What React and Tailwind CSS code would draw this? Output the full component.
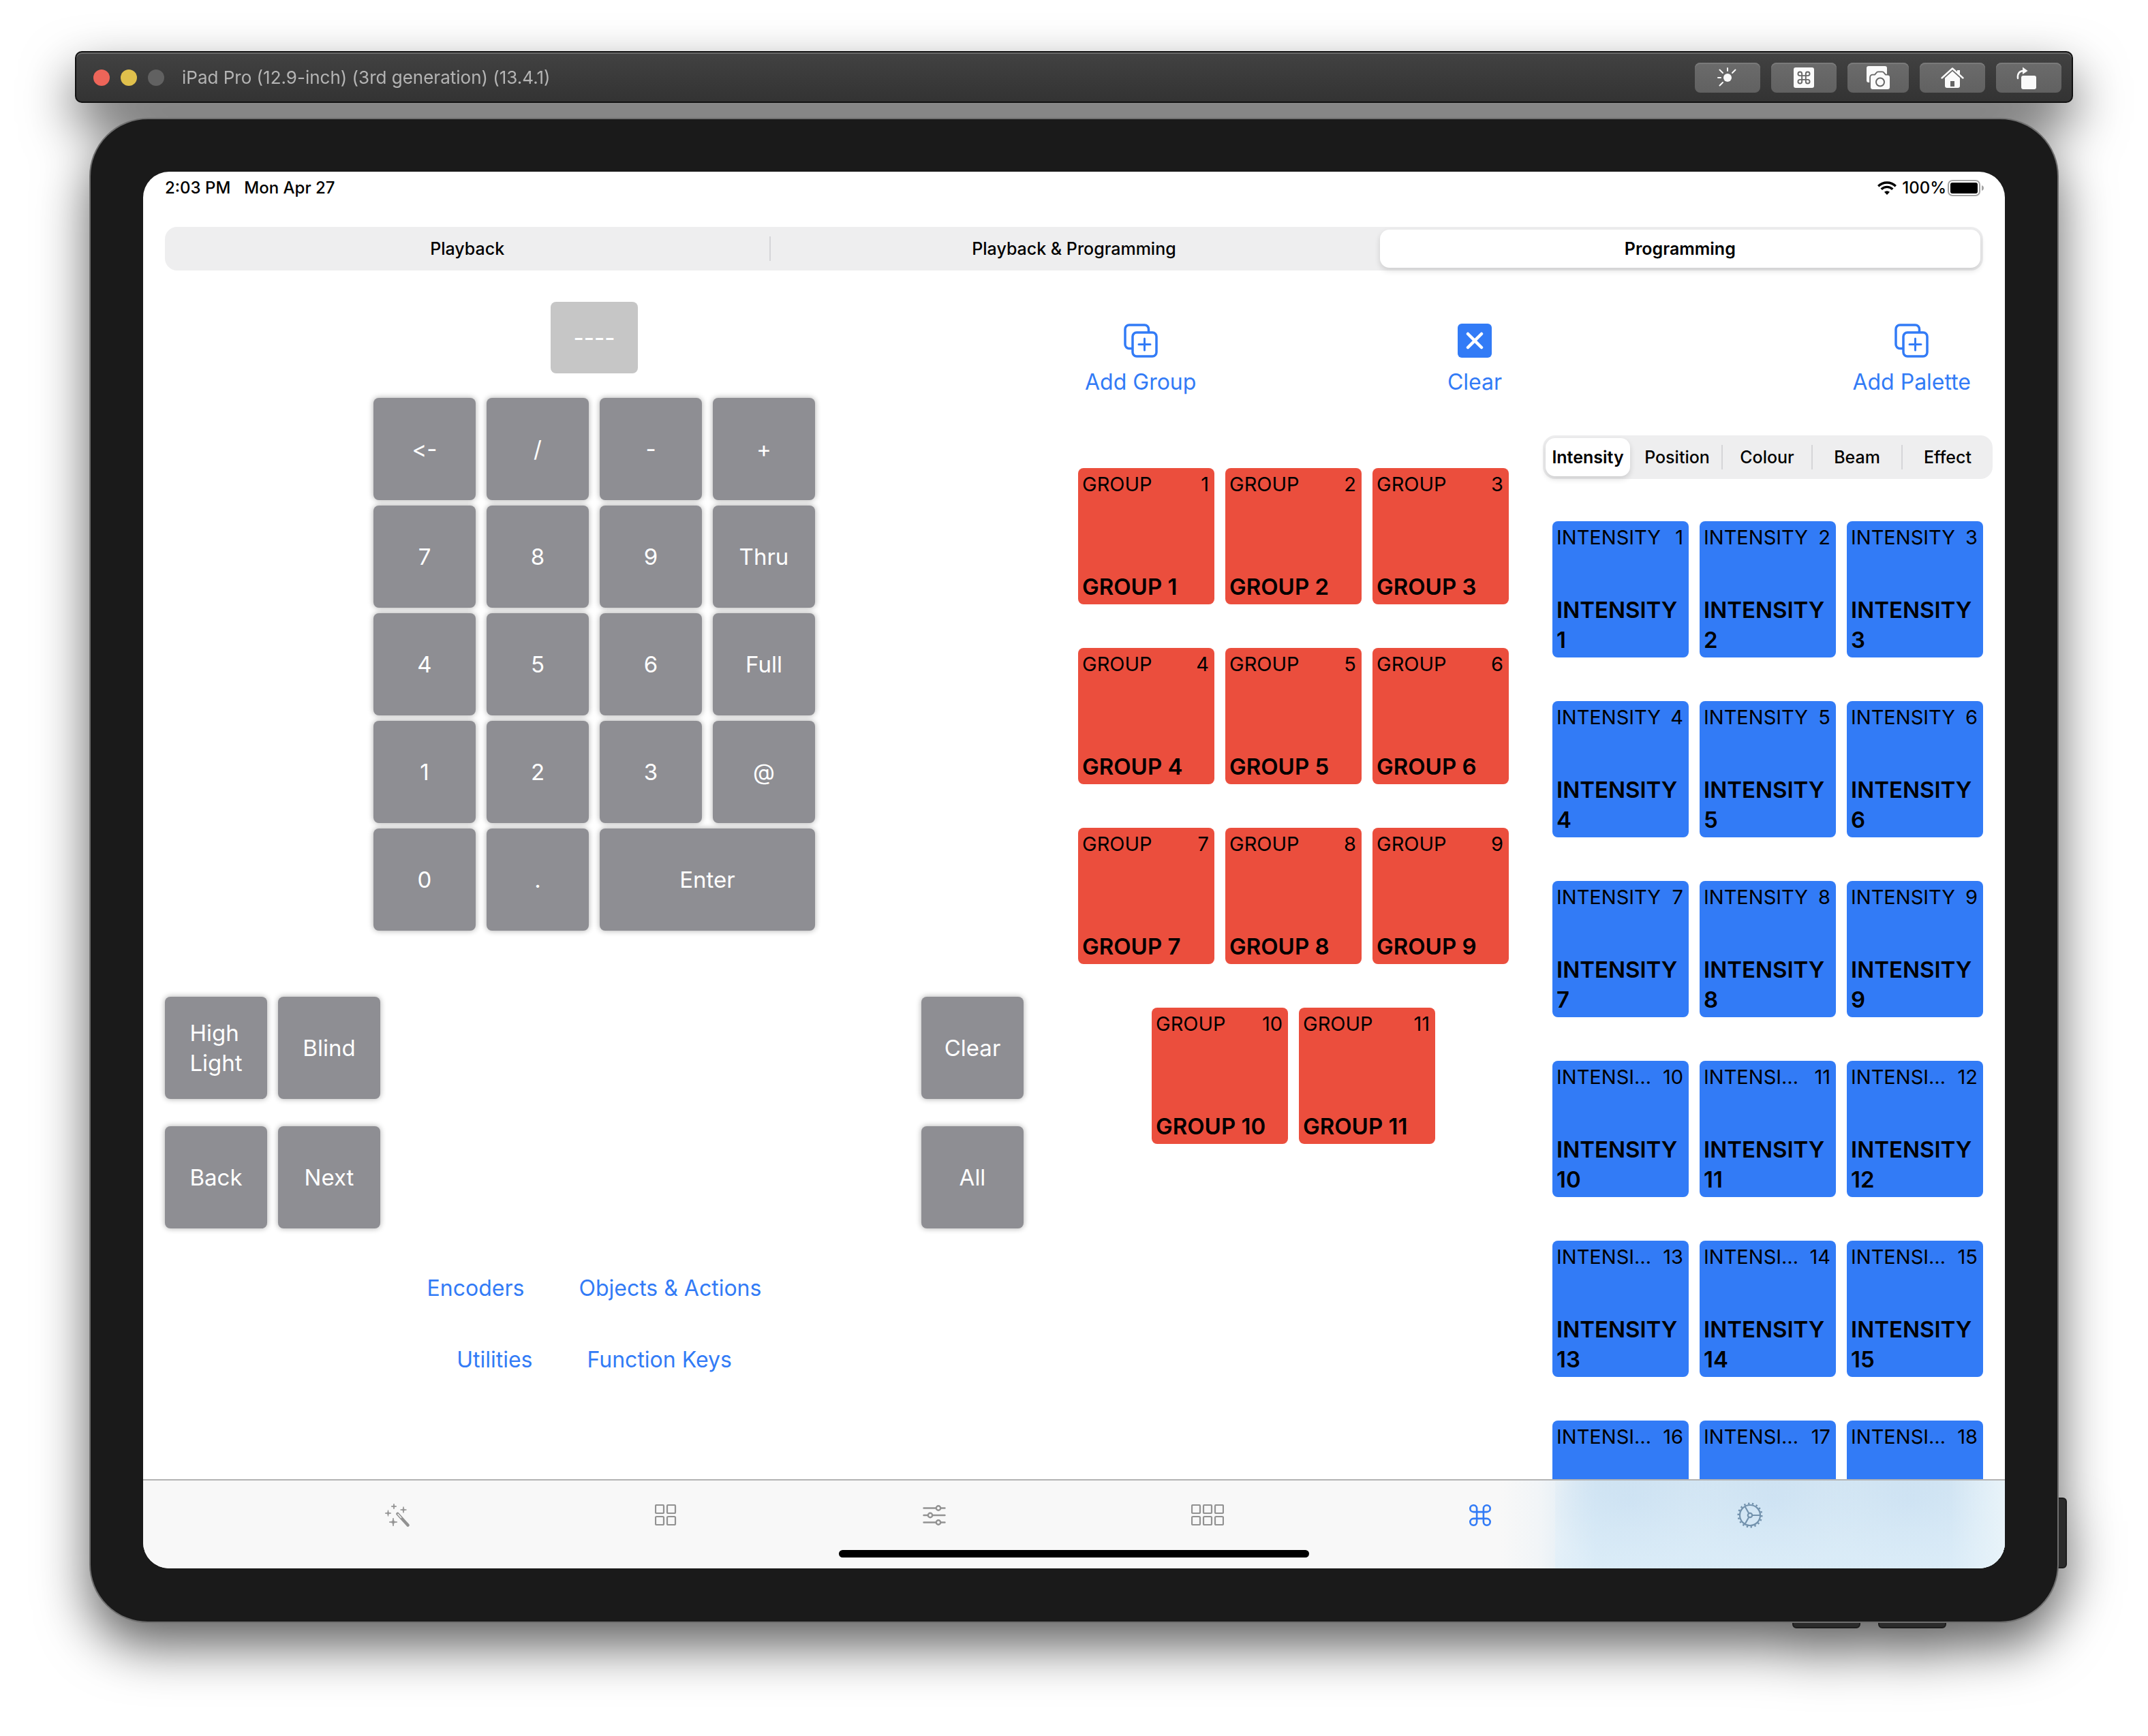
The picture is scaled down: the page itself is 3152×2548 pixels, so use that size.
import React from "react";

const COMMAND =
  "M15 6v12a3 3 0 1 0 3-3H6a3 3 0 1 0 3 3V6a3 3 0 1 0-3 3h12a3 3 0 1 0-3-3";

/* ---------- simulator toolbar icons ---------- */

function SunIcon() {
  return (
    <svg viewBox="0 0 40 40" className="size-10" fill="none" stroke="#fafafa" strokeWidth="2" strokeLinecap="round">
      <circle cx="20" cy="20" r="6" fill="#fafafa" stroke="none" />
      <path d="M20 6v4M8.500 8.500l4.500 4.500M31.500 8.500L27 13M6 20h4M8.500 31.500L13 27" />
    </svg>
  );
}

function CommandKeyIcon() {
  return (
    <svg viewBox="0 0 40 40" className="size-10">
      <rect x="5" y="5" width="30" height="30" rx="3" fill="#fafafa" />
      <path d={COMMAND} transform="translate(8.600 8.600) scale(.95)" fill="none" stroke="#666" strokeWidth="2" />
    </svg>
  );
}

function ScreenshotIcon() {
  return (
    <svg viewBox="0 0 40 40" className="size-10">
      <rect x="3" y="3" width="30" height="24" rx="3" fill="#fafafa" />
      <path
        d="M12 16.500h3.500l3-3.500c.500-.600 1-.700 2-.700h5c1 0 1.500.100 2 .700l3 3.500h3.500a3 3 0 0 1 3 3V34a3 3 0 0 1-3 3H12a3 3 0 0 1-3-3V19.500a3 3 0 0 1 3-3z"
        fill="#fafafa"
        stroke="#666"
        strokeWidth="3.600"
        paintOrder="stroke"
      />
      <circle cx="23" cy="26.500" r="6" fill="none" stroke="#666" strokeWidth="2" />
    </svg>
  );
}

function HomeIcon() {
  return (
    <svg viewBox="0 0 40 40" className="size-10">
      <path d="M4.500 20.500L20 6.500l15.500 14" fill="none" stroke="#fafafa" strokeWidth="2.400" strokeLinecap="round" strokeLinejoin="round" />
      <path d="M27 9h4v7l-4-3.500z" fill="#fafafa" />
      <path fillRule="evenodd" d="M20 10.500l11 10V32a3 3 0 0 1-3 3H12a3 3 0 0 1-3-3V20.500zM17 25v8h6v-8z" fill="#fafafa" />
    </svg>
  );
}

function RotateIcon() {
  return (
    <svg viewBox="0 0 40 40" className="size-10">
      <rect x="9" y="17" width="22" height="20" rx="3" fill="#fafafa" />
      <path d="M4 21c-1-6 2-11 8-11" fill="none" stroke="#fafafa" strokeWidth="2.400" strokeLinecap="round" />
      <path d="M11 4.500l7.500 5.500-7.500 5z" fill="#fafafa" />
    </svg>
  );
}

/* ---------- app icons ---------- */

function AddSquaresIcon() {
  return (
    <svg viewBox="0 0 50 50" className="size-[50px]" fill="none" stroke="currentColor" strokeWidth="3.500" strokeLinecap="round">
      <path d="M36.500 12V8a6 6 0 0 0-6-6H8a6 6 0 0 0-6 6v22.500a6 6 0 0 0 6 6h4" strokeLinecap="butt" />
      <rect x="13" y="13" width="35" height="35" rx="6" />
      <path d="M30.500 22v17M22 30.500h17" strokeWidth="3" />
    </svg>
  );
}

function ClearIcon() {
  return (
    <svg viewBox="0 0 50 50" className="size-[50px]">
      <rect width="50" height="50" rx="6" fill="currentColor" />
      <path d="M15 15l20 20M35 15L15 35" stroke="#fff" strokeWidth="4.500" strokeLinecap="round" />
    </svg>
  );
}

function Sparkle({ x, y, r }) {
  const k = r * 0.18;
  return (
    <path
      d={`M${x} ${y - r}L${x + k} ${y - k}L${x + r} ${y}L${x + k} ${y + k}L${x} ${y + r}L${x - k} ${y + k}L${x - r} ${y}L${x - k} ${y - k}Z`}
      fill="currentColor"
      stroke="currentColor"
      strokeWidth=".8"
      strokeLinejoin="round"
    />
  );
}

function WandIcon() {
  return (
    <svg viewBox="0 0 36 36" className="size-9">
      <Sparkle x={13} y={5} r={4} />
      <Sparkle x={27} y={10} r={4.5} />
      <Sparkle x={4.5} y={15} r={4.5} />
      <Sparkle x={12} y={28} r={6} />
      <path d="M18.500 16L33.500 32.500" stroke="currentColor" strokeWidth="4.500" strokeLinecap="round" />
      <path d="M19 16.500l4.500 5" stroke="#f8f8f8" strokeWidth="1.500" strokeLinecap="round" />
    </svg>
  );
}

function Grid4Icon() {
  return (
    <svg viewBox="0 0 32 32" className="size-8" fill="none" stroke="currentColor" strokeWidth="2.200">
      <rect x="1" y="1" width="12" height="12" rx="1.500" />
      <rect x="18" y="1" width="12" height="12" rx="1.500" />
      <rect x="1" y="18" width="12" height="12" rx="1.500" />
      <rect x="18" y="18" width="12" height="12" rx="1.500" />
    </svg>
  );
}

function SlidersIcon() {
  return (
    <svg viewBox="0 0 34 32" className="h-8 w-[34px]" fill="none" stroke="currentColor" strokeWidth="2.400" strokeLinecap="round">
      <path d="M1.500 5.500H19M27 5.500h5.500M1.500 16H7M15 16h17.500M1.500 26.500H19M27 26.500h5.500" />
      <circle cx="23" cy="5.500" r="3.200" />
      <circle cx="11" cy="16" r="3.200" />
      <circle cx="23" cy="26.500" r="3.200" />
    </svg>
  );
}

function Grid6Icon() {
  return (
    <svg viewBox="0 0 48 32" className="h-8 w-12" fill="none" stroke="currentColor" strokeWidth="2.200">
      {[1, 18, 35].map((x) => (
        <g key={x}>
          <rect x={x} y="1" width="12" height="12" rx="1.500" />
          <rect x={x} y="18" width="12" height="12" rx="1.500" />
        </g>
      ))}
    </svg>
  );
}

function CommandIcon() {
  return (
    <svg viewBox="2.200 2.200 19.600 19.600" className="size-8" fill="none" stroke="currentColor" strokeWidth="1.600">
      <path d={COMMAND} />
    </svg>
  );
}

function GearIcon() {
  return (
    <svg viewBox="0 0 38 38" className="size-[38px]" fill="none" stroke="currentColor" strokeWidth="2.200">
      <circle cx="19" cy="19" r="15" />
      <circle cx="19" cy="19" r="17.200" strokeWidth="2.600" pathLength="18" strokeDasharray=".4 .6" />
      <circle cx="19" cy="19" r="3.200" />
      <path d="M22.500 19H34M17.200 16L11.500 6M17.200 22L11.500 32" />
    </svg>
  );
}

function WifiIcon() {
  return (
    <svg viewBox="0 0 28 20" className="h-5 w-7" fill="none" stroke="#000" strokeWidth="3.400">
      <path d="M1.200 7.200a18.200 18.200 0 0 1 25.600 0" />
      <path d="M5.700 11.800a11.800 11.800 0 0 1 16.600 0" />
      <path d="M14 20l-4-4.200a5.800 5.800 0 0 1 8 0z" fill="#000" stroke="none" />
    </svg>
  );
}

function BatteryIcon() {
  return (
    <svg viewBox="0 0 54 24" className="h-6 w-[54px]">
      <rect x="1" y="1" width="46" height="22" rx="6" fill="none" stroke="#a3a3a3" strokeWidth="2" />
      <rect x="4" y="4" width="40" height="16" rx="3" fill="#000" />
      <path d="M50 8c2 .700 3 2.200 3 4s-1 3.300-3 4z" fill="#a3a3a3" />
    </svg>
  );
}

/* ---------- controls ---------- */

function Segmented({ items, selected, label, dividers }) {
  return (
    <div role="tablist" aria-label={label} className="flex h-16 rounded-[18px] bg-[#eeeeef] text-[25px] leading-8">
      {items.map((item, i) => (
        <div key={item} className="flex flex-1 basis-0 items-center">
          <button
            type="button"
            role="tab"
            aria-selected={i === selected}
            className={
              i === selected
                ? "m-1 h-14 flex-1 whitespace-nowrap rounded-[14px] bg-white text-center font-semibold shadow-[0_4px_8px_rgba(0,0,0,0.14)]"
                : "h-full flex-1 whitespace-nowrap text-center font-medium"
            }
          >
            {item}
          </button>
          {dividers.includes(i) && <span className="h-9 w-0.5 bg-[#d5d5d8]" />}
        </div>
      ))}
    </div>
  );
}

const keyBase =
  "flex h-[150px] items-center justify-center rounded-lg bg-[#8e8e93] text-[33px] leading-[44px] text-white shadow-[0_0_8px_rgba(0,0,0,0.33)] [font-feature-settings:'calt'_0]";

function Key({ children, wide }) {
  return (
    <button type="button" className={wide ? `${keyBase} col-span-2` : `${keyBase} w-[150px]`}>
      {children}
    </button>
  );
}

function LinkButton({ children }) {
  return (
    <button type="button" className="text-[32px] leading-[44px] text-[#327bf6]">
      {children}
    </button>
  );
}

function ActionButton({ icon, children }) {
  return (
    <button type="button" className="flex flex-col items-center gap-3.5 text-[32px] leading-[44px] text-[#327bf6]">
      {icon}
      {children}
    </button>
  );
}

function Tile({ kind, number, color }) {
  return (
    <button
      type="button"
      className={`flex h-[200px] w-[200px] flex-col justify-between rounded-lg px-1.5 pb-1 pt-1.5 text-left text-black ${color}`}
    >
      <span className="flex w-full justify-between gap-3.5 pr-0.5 text-[29px] leading-9">
        <span className="truncate">{kind}</span>
        <span>{number}</span>
      </span>
      <span className="w-full text-[33px] font-semibold leading-[44px]">
        {kind} {number}
      </span>
    </button>
  );
}

const keys = ["<-", "/", "-", "+", "7", "8", "9", "Thru", "4", "5", "6", "Full", "1", "2", "3", "@", "0", ".", "Enter"];
const groupRows = [[1, 2, 3], [4, 5, 6], [7, 8, 9], [10, 11]];
const intensities = Array.from({ length: 18 }, (_, i) => i + 1);

const toolbar = [
  { name: "Appearance", icon: <SunIcon />, width: "w-24" },
  { name: "Keyboard", icon: <CommandKeyIcon />, width: "w-24" },
  { name: "Screenshot", icon: <ScreenshotIcon />, width: "w-[90px]" },
  { name: "Home", icon: <HomeIcon />, width: "w-24" },
  { name: "Rotate", icon: <RotateIcon />, width: "w-24" },
];

const tabs = [
  { name: "Effects", icon: <WandIcon />, color: "text-[#929292]" },
  { name: "Grid", icon: <Grid4Icon />, color: "text-[#929292]" },
  { name: "Faders", icon: <SlidersIcon />, color: "text-[#929292]" },
  { name: "Cues", icon: <Grid6Icon />, color: "text-[#929292]" },
  { name: "Programming", icon: <CommandIcon />, color: "text-[#327bf6]" },
  { name: "Settings", icon: <GearIcon />, color: "text-[#7392ad]" },
];

function TitleBar() {
  return (
    <header className="relative z-10 flex h-[76px] items-center rounded-[10px] border-2 border-[#111] bg-linear-to-b from-[#424242] to-[#333333] pl-[25px] pr-[15px] pt-0.5 shadow-[inset_0_2px_0_#6a6a6a]">
      <div className="flex gap-4">
        <button type="button" aria-label="Close" className="size-6 rounded-full bg-[#ed6559]" />
        <button type="button" aria-label="Minimise" className="size-6 rounded-full bg-[#e0c04c]" />
        <button type="button" aria-label="Zoom" className="size-6 rounded-full bg-[#616161]" />
      </div>
      <h1 className="ml-[26px] flex-1 text-[26px] leading-8 text-[#b4b4b4]">
        iPad Pro (12.9-inch) (3rd generation) (13.4.1)
      </h1>
      <div className="flex gap-4">
        {toolbar.map((t) => (
          <button
            key={t.name}
            type="button"
            aria-label={t.name}
            className={`flex h-11 items-center justify-center rounded-lg bg-linear-to-b from-[#6b6b6b] to-[#616161] shadow-[inset_0_2px_0_#7a7a7a] ${t.width}`}
          >
            {t.icon}
          </button>
        ))}
      </div>
    </header>
  );
}

function Programmer() {
  return (
    <section className="min-w-0 flex-1 pt-[46px]">
      <output className="mx-auto flex h-[105px] w-32 items-center justify-center rounded-lg bg-[#c6c6c6] text-[33px] font-medium leading-[44px] text-white">
        ----
      </output>
      <div className="mx-auto mt-9 grid w-[648px] grid-cols-4 gap-x-4 gap-y-2">
        {keys.map((k) => (
          <Key key={k} wide={k === "Enter"}>
            {k}
          </Key>
        ))}
      </div>
      <div className="mt-[97px] flex flex-col gap-10">
        <div className="flex gap-4">
          <Key>
            <span className="text-left">
              High
              <br />
              Light
            </span>
          </Key>
          <Key>Blind</Key>
          <span className="flex-1" />
          <Key>Clear</Key>
        </div>
        <div className="flex gap-4">
          <Key>Back</Key>
          <Key>Next</Key>
          <span className="flex-1" />
          <Key>All</Key>
        </div>
      </div>
      <div className="mt-[66px] flex flex-col gap-[61px]">
        <div className="flex justify-center gap-20">
          <LinkButton>Encoders</LinkButton>
          <LinkButton>Objects &amp; Actions</LinkButton>
        </div>
        <div className="flex justify-center gap-20">
          <LinkButton>Utilities</LinkButton>
          <LinkButton>Function Keys</LinkButton>
        </div>
      </div>
    </section>
  );
}

function Groups() {
  return (
    <section className="ml-20 w-[632px] shrink-0 pt-[78px]">
      <div className="flex justify-between px-2.5">
        <ActionButton icon={<AddSquaresIcon />}>Add Group</ActionButton>
        <ActionButton icon={<ClearIcon />}>Clear</ActionButton>
      </div>
      <div className="mt-[104px] flex flex-col gap-16">
        {groupRows.map((row) => (
          <div key={row[0]} className="flex justify-center gap-4">
            {row.map((n) => (
              <Tile key={n} kind="GROUP" number={n} color="bg-[#eb4e3d]" />
            ))}
          </div>
        ))}
      </div>
    </section>
  );
}

function Palettes() {
  return (
    <section className="ml-[50px] w-[660px] shrink-0 pt-[78px]">
      <div className="flex justify-end pr-8">
        <ActionButton icon={<AddSquaresIcon />}>Add Palette</ActionButton>
      </div>
      <div className="mt-14">
        <Segmented
          label="Palette type"
          items={["Intensity", "Position", "Colour", "Beam", "Effect"]}
          selected={0}
          dividers={[1, 2, 3]}
        />
      </div>
      <div className="mt-[62px] grid grid-cols-3 justify-items-center gap-x-4 gap-y-16 px-3.5">
        {intensities.map((n) => (
          <Tile key={n} kind="INTENSITY" number={n} color="bg-[#327bf6]" />
        ))}
      </div>
    </section>
  );
}

function TabBar() {
  return (
    <nav className="relative flex h-[131px] shrink-0 flex-col border-t-2 border-[#b3b3b3] bg-[#f8f8f8]">
      <div className="absolute inset-y-0 right-0 w-[740px] bg-[linear-gradient(to_right,#d5e7f400,#d5e7f433_60px,#d5e7f4_140px)]" />
      <div className="absolute inset-y-0 right-0 w-[660px] bg-[radial-gradient(130px_100px_at_110px_30px,#cce1f2,transparent),radial-gradient(130px_100px_at_320px_30px,#cce1f2,transparent),radial-gradient(130px_100px_at_520px_30px,#cce1f2,transparent)]" />
      <div className="absolute inset-y-0 right-0 w-[660px] bg-[linear-gradient(to_left,#e8f3f9,transparent_80px),linear-gradient(to_bottom,transparent,#deeffa99)]" />
      <div className="relative flex h-[102px] items-center justify-between px-[13%]">
        {tabs.map((t) => (
          <button key={t.name} type="button" aria-label={t.name} className={t.color}>
            {t.icon}
          </button>
        ))}
      </div>
      <div className="relative mx-auto h-[11px] w-[690px] rounded-full bg-black" />
    </nav>
  );
}

export default function App() {
  return (
    <div className="h-screen overflow-hidden bg-white pb-[166px] pl-[110px] pr-[110px] pt-[75px] font-['Inter','Liberation_Sans',sans-serif] text-black">
      <div className="flex h-full flex-col drop-shadow-[0_34px_38px_rgba(0,0,0,0.62)]">
        <TitleBar />
        <div className="relative mx-[21px] mt-[22px] flex min-h-0 flex-1 flex-col">
          <span className="absolute -right-3 bottom-20 h-[104px] w-6 rounded-md border-2 border-[#1c1c1c] bg-[#2b2b2b]" />
          <span className="absolute -bottom-2 right-[291px] h-6 w-[100px] rounded-md border-2 border-[#1c1c1c] bg-[#2b2b2b]" />
          <span className="absolute -bottom-2 right-[165px] h-6 w-[100px] rounded-md border-2 border-[#1c1c1c] bg-[#2b2b2b]" />
          <div className="relative flex min-h-0 flex-1 flex-col rounded-[86px] border-2 border-[#6f6f6f] bg-[#1a1a1a] px-[77px] pb-[78px] pt-[77px]">
            <div className="flex min-h-0 flex-1 flex-col overflow-hidden rounded-[38px] bg-white">
              <div className="flex h-12 shrink-0 items-center pl-8 pr-[30px] text-[24px] font-medium leading-8">
                <time>2:03 PM</time>
                <span className="ml-5 flex-1">Mon Apr 27</span>
                <WifiIcon />
                <span className="ml-2 mr-0.5">100%</span>
                <BatteryIcon />
              </div>
              <div className="mx-8 mt-[33px] shrink-0">
                <Segmented
                  label="Mode"
                  items={["Playback", "Playback & Programming", "Programming"]}
                  selected={2}
                  dividers={[0]}
                />
              </div>
              <main className="flex min-h-0 flex-1 overflow-hidden pl-8 pr-[18px]">
                <Programmer />
                <Groups />
                <Palettes />
              </main>
              <TabBar />
            </div>
          </div>
        </div>
      </div>
    </div>
  );
}
